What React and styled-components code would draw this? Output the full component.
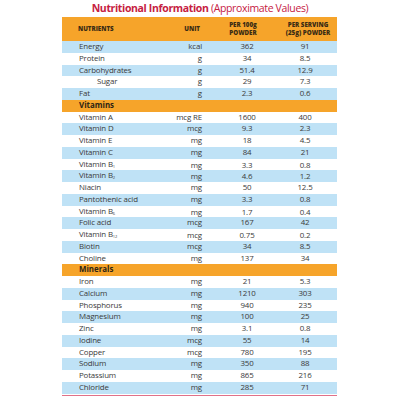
import styled, { createGlobalStyle } from "styled-components"

const GlobalStyle = createGlobalStyle`
    html, body {
        margin: 0;
        padding: 0;
        background: #fff;
    }
    body {
        font-family: "Open Sans", "Liberation Sans", sans-serif;
        color: #3a3a3a;
    }
`;

const rows = [
    { name: "Energy", unit: "kcal", per100: "362", serving: "91", shade: true },
    { name: "Protein", unit: "g", per100: "34", serving: "8.5" },
    { name: "Carbohydrates", unit: "g", per100: "51.4", serving: "12.9", shade: true },
    { name: "Sugar", unit: "g", per100: "29", serving: "7.3", indent: true },
    { name: "Fat", unit: "g", per100: "2.3", serving: "0.6", shade: true },
    { section: "Vitamins" },
    { name: "Vitamin A", unit: "mcg RE", per100: "1600", serving: "400" },
    { name: "Vitamin D", unit: "mcg", per100: "9.3", serving: "2.3", shade: true },
    { name: "Vitamin E", unit: "mg", per100: "18", serving: "4.5" },
    { name: "Vitamin C", unit: "mg", per100: "84", serving: "21", shade: true },
    { name: "Vitamin B", sub: "1", unit: "mg", per100: "3.3", serving: "0.8" },
    { name: "Vitamin B", sub: "2", unit: "mg", per100: "4.6", serving: "1.2", shade: true },
    { name: "Niacin", unit: "mg", per100: "50", serving: "12.5" },
    { name: "Pantothenic acid", unit: "mg", per100: "3.3", serving: "0.8", shade: true },
    { name: "Vitamin B", sub: "6", unit: "mg", per100: "1.7", serving: "0.4" },
    { name: "Folic acid", unit: "mcg", per100: "167", serving: "42", shade: true },
    { name: "Vitamin B", sub: "12", unit: "mcg", per100: "0.75", serving: "0.2" },
    { name: "Biotin", unit: "mcg", per100: "34", serving: "8.5", shade: true },
    { name: "Choline", unit: "mg", per100: "137", serving: "34" },
    { section: "Minerals" },
    { name: "Iron", unit: "mg", per100: "21", serving: "5.3" },
    { name: "Calcium", unit: "mg", per100: "1210", serving: "303", shade: true },
    { name: "Phosphorus", unit: "mg", per100: "940", serving: "235" },
    { name: "Magnesium", unit: "mg", per100: "100", serving: "25", shade: true },
    { name: "Zinc", unit: "mg", per100: "3.1", serving: "0.8" },
    { name: "Iodine", unit: "mcg", per100: "55", serving: "14", shade: true },
    { name: "Copper", unit: "mcg", per100: "780", serving: "195" },
    { name: "Sodium", unit: "mg", per100: "350", serving: "88", shade: true },
    { name: "Potassium", unit: "mg", per100: "865", serving: "216" },
    { name: "Chloride", unit: "mg", per100: "285", serving: "71", shade: true },
];

const App = () => {
    return (
        <Page>
            <GlobalStyle />
            <Title>
                <strong>Nutritional Information</strong> (Approximate Values)
            </Title>
            <Table>
                <HeaderRow>
                    <HeadCell align="left">NUTRIENTS</HeadCell>
                    <HeadCell align="right">UNIT</HeadCell>
                    <HeadCell>PER 100g<br />POWDER</HeadCell>
                    <HeadCell>PER SERVING<br />(25g) POWDER</HeadCell>
                </HeaderRow>
                {rows.map((r, i) =>
                    r.section ? (
                        <SectionRow key={i}>{r.section}</SectionRow>
                    ) : (
                        <Row key={i} shade={r.shade ? 1 : 0}>
                            <NameCell indent={r.indent ? 1 : 0}>
                                {r.name}
                                {r.sub && <Sub>{r.sub}</Sub>}
                            </NameCell>
                            <UnitCell>{r.unit}</UnitCell>
                            <ValueCell>{r.per100}</ValueCell>
                            <ServingCell>{r.serving}</ServingCell>
                        </Row>
                    )
                )}
            </Table>
            <BottomRule />
        </Page>
    )
}

const Page = styled.div`
    width: 400px;
    height: 400px;
    padding-top: 1px;
    box-sizing: border-box;
    display: flex;
    flex-direction: column;
    align-items: center;
`;

const Title = styled.div`
    color: #c6203f;
    font-size: 10.5px;
    line-height: 14px;
    letter-spacing: -0.35px;
    margin-bottom: 2px;
    strong {
        font-weight: 700;
    }
`;

const Table = styled.div`
    width: 275px;
    margin-left: -1px;
    display: grid;
    grid-template-columns: 98px 52px 70px 55px;
`;

const HeaderRow = styled.div`
    grid-column: 1 / -1;
    display: grid;
    grid-template-columns: subgrid;
    height: 24px;
    align-items: center;
    background: #f6a42a;
`;

const HeadCell = styled.div`
    font-size: 6.2px;
    font-weight: 800;
    line-height: 7.8px;
    color: #3b2c14;
    text-align: ${(p) => p.align || "center"};
    padding-left: ${(p) => (p.align === "left" ? "16px" : "0")};
    padding-right: ${(p) => (p.align === "right" ? "12px" : "0")};
    &:nth-child(3) {
        padding-right: 8px;
    }
    &:nth-child(4) {
        padding-right: 3px;
    }
`;

const Row = styled.div`
    grid-column: 1 / -1;
    display: grid;
    grid-template-columns: subgrid;
    height: 11.75px;
    align-items: center;
    font-size: 7.9px;
    line-height: 11.75px;
    letter-spacing: -0.15px;
    background: ${(p) => (p.shade ? "#bfe2f6" : "#fff")};
`;

const SectionRow = styled.div`
    grid-column: 1 / -1;
    height: 11.75px;
    line-height: 11.75px;
    padding-left: 17px;
    font-size: 7.9px;
    font-weight: 700;
    color: #2e2414;
    background: #f6a42a;
`;

const NameCell = styled.div`
    padding-left: ${(p) => (p.indent ? "35px" : "17px")};
    white-space: nowrap;
`;

const Sub = styled.span`
    font-size: 4px;
    vertical-align: -1px;
`;

const UnitCell = styled.div`
    text-align: right;
    padding-right: 10px;
    white-space: nowrap;
`;

const ValueCell = styled.div`
    text-align: center;
`;

const ServingCell = styled.div`
    text-align: center;
    padding-right: 9px;
`;

const BottomRule = styled.div`
    width: 275px;
    margin-left: -1px;
    margin-top: 1px;
    height: 1.5px;
    background: #e07189;
`;

export default App;
